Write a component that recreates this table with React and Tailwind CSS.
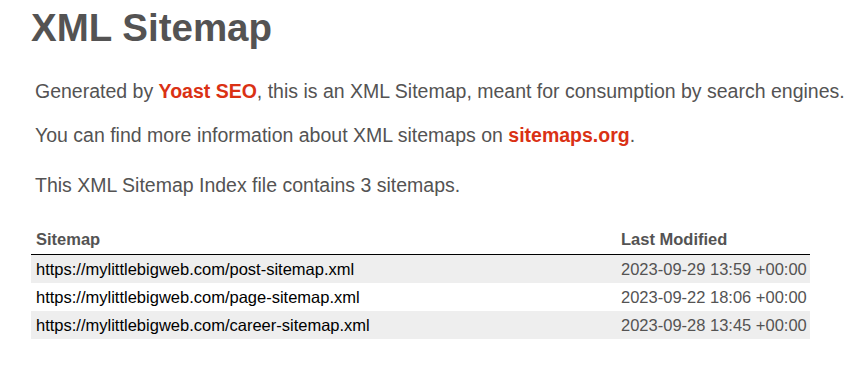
const rows = [
  { url: "https://mylittlebigweb.com/post-sitemap.xml", mod: "2023-09-29 13:59 +00:00" },
  { url: "https://mylittlebigweb.com/page-sitemap.xml", mod: "2023-09-22 18:06 +00:00" },
  { url: "https://mylittlebigweb.com/career-sitemap.xml", mod: "2023-09-28 13:45 +00:00" },
];

export default function App() {
  return (
    <div className="min-h-screen bg-white font-['Liberation_Sans',Arial,sans-serif] text-[#545353]">
      <div className="pl-[31px] pt-[7px]">
        {/* Title */}
        <h1 className="text-[38.5px] font-bold leading-[42px]">XML Sitemap</h1>

        {/* Explanation */}
        <p className="mx-[4px] mt-[31px] whitespace-nowrap text-[19.5px] leading-[22px]">
          Generated by{" "}
          <a className="font-bold text-[#da3114]" href="#">
            Yoast SEO
          </a>
          , this is an XML Sitemap, meant for consumption by search engines.
        </p>
        <p className="mx-[4px] mt-[22px] whitespace-nowrap text-[19.5px] leading-[22px]">
          You can find more information about XML sitemaps on{" "}
          <a className="font-bold text-[#da3114]" href="#">
            sitemaps.org
          </a>
          .
        </p>
        <p className="mx-[4px] mt-[28px] whitespace-nowrap text-[19.5px] leading-[22px]">
          This XML Sitemap Index file contains 3 sitemaps.
        </p>

        {/* Sitemap table */}
        <table className="mt-[30px] w-[779px] border-collapse text-[16.5px]">
          <thead>
            <tr>
              <th className="w-[585px] border-b border-black pl-[5px] pt-[4px] pb-[6px] text-left font-bold leading-[18px]">
                Sitemap
              </th>
              <th className="border-b border-black pl-[5px] pt-[4px] pb-[6px] text-left font-bold leading-[18px]">
                Last Modified
              </th>
            </tr>
          </thead>
          <tbody>
            {rows.map((r, i) => (
              <tr key={r.url} className={`h-[28px] ${i % 2 === 0 ? "bg-[#eee]" : "bg-white"}`}>
                <td className="pl-[5px] leading-[18px]">
                  <a className="text-black" href="#">
                    {r.url}
                  </a>
                </td>
                <td className="pl-[5px] leading-[18px]">{r.mod}</td>
              </tr>
            ))}
          </tbody>
        </table>
      </div>
    </div>
  );
}
